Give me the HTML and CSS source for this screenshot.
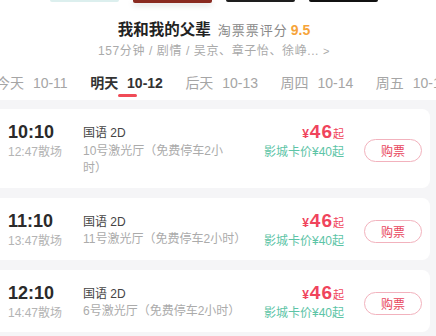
FILE: index.html
```html
<!DOCTYPE html>
<html lang="zh-CN">
<head>
<meta charset="utf-8">
<title>我和我的父辈</title>
<link rel="stylesheet" href="styles.css">
</head>
<body>
<div class="page">
  <header class="film">
    <div class="posters">
      <div class="poster p-light"></div>
      <div class="poster p-red"></div>
      <div class="poster p-dark"></div>
      <div class="poster p-black"></div>
    </div>
    <div class="title-row">
      <span class="title">我和我的父辈</span>
      <span class="score-label">淘票票评分</span>
      <span class="score">9.5</span>
    </div>
    <div class="meta">157分钟 / 剧情 / 吴京、章子怡、徐峥... <span class="chev">&gt;</span></div>
    <nav class="tabs">
      <span class="tab">今天 10-11</span>
      <span class="tab active">明天 10-12</span>
      <span class="tab">后天 10-13</span>
      <span class="tab">周四 10-14</span>
      <span class="tab">周五 10-15</span>
    </nav>
  </header>

  <section class="list">
    <div class="show">
      <div class="time-col">
        <div class="time">10:10</div>
        <div class="end">12:47散场</div>
      </div>
      <div class="info-col wrap">
        <div class="lang">国语 2D</div>
        <div class="hall">10号激光厅（免费停车2小时）</div>
      </div>
      <div class="price-col">
        <div class="price"><span class="yen">¥</span><span class="num">46</span><span class="qi">起</span></div>
        <div class="card-price">影城卡价¥40起</div>
      </div>
      <button class="buy">购票</button>
    </div>

    <div class="show">
      <div class="time-col">
        <div class="time">11:10</div>
        <div class="end">13:47散场</div>
      </div>
      <div class="info-col">
        <div class="lang">国语 2D</div>
        <div class="hall">11号激光厅（免费停车2小时）</div>
      </div>
      <div class="price-col">
        <div class="price"><span class="yen">¥</span><span class="num">46</span><span class="qi">起</span></div>
        <div class="card-price">影城卡价¥40起</div>
      </div>
      <button class="buy">购票</button>
    </div>

    <div class="show">
      <div class="time-col">
        <div class="time">12:10</div>
        <div class="end">14:47散场</div>
      </div>
      <div class="info-col">
        <div class="lang">国语 2D</div>
        <div class="hall">6号激光厅（免费停车2小时）</div>
      </div>
      <div class="price-col">
        <div class="price"><span class="yen">¥</span><span class="num">46</span><span class="qi">起</span></div>
        <div class="card-price">影城卡价¥40起</div>
      </div>
      <button class="buy">购票</button>
    </div>
  </section>
</div>
</body>
</html>
```

FILE: styles.css
```css
html, body {
  margin: 0;
  padding: 0;
}
body {
  background: #f5f5f7;
  font-family: "Liberation Sans", "Noto Sans CJK SC", sans-serif;
  color: #333;
  width: 436px;
  height: 336px;
  overflow: hidden;
}
.page {
  width: 436px;
}
.film {
  background: #fff;
  height: 100px;
  overflow: hidden;
}
.posters {
  display: flex;
  justify-content: center;
  gap: 14px;
  height: 4px;
  padding-right: 8px;
  overflow: visible;
  position: relative;
}
.poster {
  width: 69px;
  height: 2px;
  border-radius: 0 0 2px 2px;
}
.p-light {
  background: #dcefee;
}
.p-red {
  width: 79px;
  height: 3px;
  background: #8a2a20;
  box-shadow: 0 2px 6px rgba(0, 0, 0, 0.18);
}
.p-dark {
  background: #1e1e1e;
}
.p-black {
  background: #111;
}
.title-row {
  margin-top: 15px;
  height: 22px;
  line-height: 22px;
  display: flex;
  justify-content: center;
  align-items: baseline;
  padding-right: 8px;
}
.title {
  font-size: 15.5px;
  font-weight: bold;
  color: #222;
}
.score-label {
  margin-left: 7px;
  font-size: 13px;
  letter-spacing: 1px;
  color: #888;
}
.score {
  margin-left: 3px;
  font-size: 14px;
  font-weight: bold;
  color: #f6a43a;
}
.meta {
  margin-top: 2px;
  height: 16px;
  line-height: 16px;
  text-align: center;
  font-size: 12px;
  letter-spacing: 0.6px;
  color: #aaa;
  padding-right: 8px;
}
.chev {
  font-size: 11px;
}
.tabs {
  margin-top: 14px;
  display: flex;
  gap: 22.5px;
  margin-left: -4px;
  white-space: nowrap;
}
.tab {
  position: relative;
  flex-shrink: 0;
  font-size: 14px;
  line-height: 20px;
  padding-bottom: 7px;
  color: #a5a5a5;
  word-spacing: 5px;
}
.tab.active {
  color: #333;
  font-weight: bold;
}
.tab.active::after {
  content: "";
  position: absolute;
  left: 50%;
  bottom: 3px;
  width: 19px;
  height: 3px;
  margin-left: -9px;
  border-radius: 2px;
  background: #f04b57;
}
.list {
  padding-top: 9px;
  display: flex;
  flex-direction: column;
  gap: 10px;
}
.show {
  display: flex;
  align-items: flex-start;
  background: #fff;
  border-radius: 0 8px 8px 0;
  margin-right: 6px;
  padding: 12px 8px 10px 8px;
}
.time-col {
  width: 75px;
  flex-shrink: 0;
}
.time {
  font-size: 18px;
  line-height: 22px;
  font-weight: bold;
  color: #2a2a2a;
}
.end {
  font-size: 12px;
  line-height: 18px;
  color: #b4b4b4;
}
.info-col {
  width: 170px;
  flex-shrink: 0;
  padding-top: 4px;
  font-size: 12px;
  line-height: 17.5px;
}
.info-col.wrap .hall {
  width: 152px;
}
.lang {
  color: #444;
}
.hall {
  color: #ababab;
}
.price-col {
  flex: 1;
  text-align: right;
}
.price {
  line-height: 22px;
  height: 22px;
  color: #f0445c;
  font-weight: bold;
}
.yen {
  font-size: 12px;
  margin-right: 1px;
}
.num {
  font-size: 19px;
  letter-spacing: 1px;
}
.qi {
  font-size: 11px;
  font-weight: normal;
}
.card-price {
  font-size: 12px;
  line-height: 18px;
  color: #5cc4a6;
}
.buy {
  align-self: center;
  flex-shrink: 0;
  margin-left: 20px;
  margin-top: 3px;
  width: 58px;
  height: 23px;
  padding: 0;
  border: 1px solid #f2b2bd;
  border-radius: 12px;
  background: #fff;
  font-family: "Liberation Sans", "Noto Sans CJK SC", sans-serif;
  font-size: 12px;
  color: #e8455c;
}
```
